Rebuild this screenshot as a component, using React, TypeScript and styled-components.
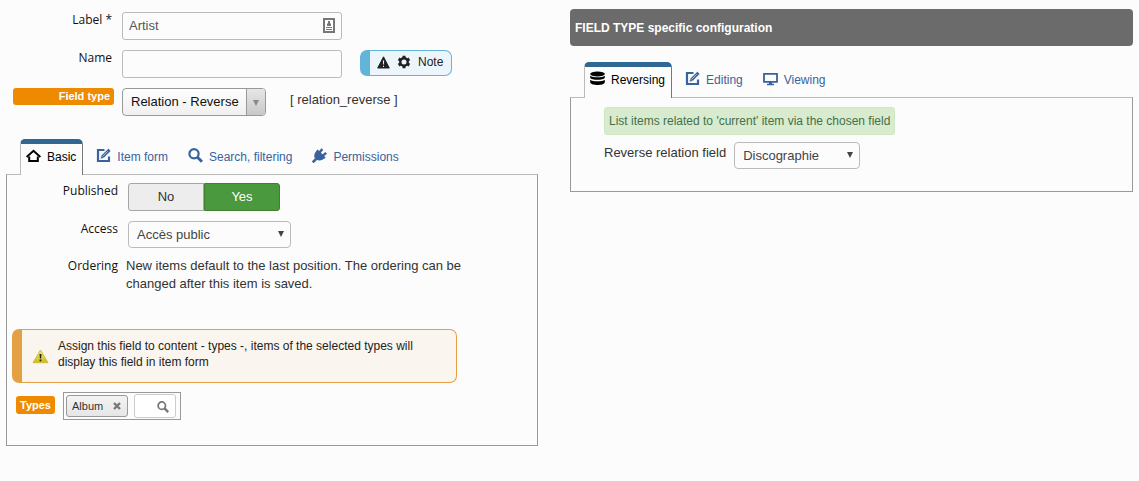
import React, { useState } from "react";
import styled, { createGlobalStyle, css } from "styled-components";

const GlobalStyle = createGlobalStyle`
  *, *::before, *::after { box-sizing: border-box; }
  body {
    margin: 0;
    background: #fcfcfc;
    color: #333;
    font: 13px/18px "Liberation Sans", Arial, sans-serif;
  }
  button, input, select { font: inherit; }
`;

const Page = styled.main`
  display: grid;
  grid-template-columns: minmax(0, 532fr) minmax(0, 563fr);
  column-gap: 32px;
  align-items: start;
  padding: 9px 6px 24px;
`;

const Column = styled.section`
  min-width: 0;
`;

const FieldList = styled.div`
  display: flex;
  flex-direction: column;
  gap: 10px;
  padding-top: 3px;
`;

const FieldRow = styled.div`
  display: flex;
  align-items: flex-start;
`;

const FieldLabel = styled.label<{ $wide?: boolean }>`
  flex: none;
  width: 116px;
  padding-right: ${(p) => (p.$wide ? 4 : 10)}px;
  color: #111;
  font: 12px/16px "Open Sans", "Noto Sans", sans-serif;
  text-align: right;
`;

const TypeLabel = styled.label`
  flex: none;
  width: 101px;
  margin: 0 8px 0 7px;
  padding-right: 4px;
  border-radius: 3px;
  background: #ed8a00;
  color: #fff;
  font-size: 11px;
  line-height: 17px;
  font-weight: bold;
  text-align: right;
`;

const InputFrame = styled.div`
  position: relative;
  width: 220px;
`;

const TextInput = styled.input`
  display: block;
  width: 100%;
  height: 28px;
  padding: 0 24px 2px 6px;
  border: 1px solid #bbb;
  border-radius: 3px;
  background: #fcfcfc;
  color: #555;
`;

const CardIcon = styled.svg`
  position: absolute;
  top: 6px;
  right: 7px;
  pointer-events: none;
`;

const Note = styled.button`
  display: flex;
  align-items: center;
  height: 26px;
  margin-left: 18px;
  padding: 0 8px 2px 7px;
  border: 1px solid #62b5d9;
  border-left-width: 10px;
  border-radius: 7px;
  background: #ecf5fc;
  color: #222;
  font-size: 12px;

  svg + svg { margin: 0 7px; }
`;

const SelectFrame = styled.div<{ $width: number; $combo?: boolean }>`
  position: relative;
  width: ${(p) => p.$width}px;

  select {
    appearance: none;
    display: block;
    width: 100%;
    height: 27px;
    padding: 0 20px 0 8px;
    border: 1px solid #bbb;
    border-radius: 4px;
    background: #fcfcfc;
    color: #444;
  }

  svg {
    position: absolute;
    top: 9px;
    right: 6px;
    pointer-events: none;
  }

  ${(p) =>
    p.$combo &&
    css`
      select {
        height: 28px;
        border-color: #999;
        background: linear-gradient(#fdfdfd, #f0f0f0);
        color: #111;
      }
      span {
        position: absolute;
        top: 1px;
        right: 1px;
        bottom: 1px;
        width: 19px;
        border-left: 1px solid #999;
        border-radius: 0 3px 3px 0;
        background: linear-gradient(#e6e6e6, #c8c8c8);
        pointer-events: none;
      }
      svg { top: 11px; }
    `}
`;

const FieldCode = styled.span`
  margin-left: 24px;
  line-height: 24px;
`;

const Tabs = styled.div`
  display: flex;
  gap: 7px;
  padding-left: 14px;
`;

const TabButton = styled.button<{ $active: boolean }>`
  position: relative;
  display: flex;
  align-items: center;
  gap: 6px;
  height: 36px;
  margin-bottom: -1px;
  padding: 4px 6px 6px 5px;
  border: 1px solid transparent;
  border-bottom: 0;
  background: transparent;
  color: #39639f;
  font-size: 12px;
  line-height: 18px;
  cursor: pointer;

  svg { flex: none; margin-bottom: 2px; }

  ${(p) =>
    p.$active &&
    css`
      padding-top: 0;
      border-top: 5px solid #2f6893;
      border-right-color: #777;
      border-left-color: #bbb;
      border-radius: 5px 5px 0 0;
      background: #fcfcfc;
      color: #000;
    `}
`;

const Panel = styled.div`
  border: 1px solid #999;
  border-top-color: #bbb;
`;

const LeftTabs = styled.div`
  margin-top: 23px;
`;

const BasicPanel = styled(Panel)`
  padding: 8px 5px 25px;
`;

const PanelFields = styled.div`
  display: flex;
  flex-direction: column;
  gap: 10px;
`;

const Toggle = styled.div`
  display: flex;
  width: 152px;
  height: 28px;

  input {
    appearance: none;
    position: absolute;
    margin: 0;
  }
`;

const ToggleOption = styled.label<{ $on: boolean; $yes?: boolean }>`
  flex: 1;
  border: 1px solid ${(p) => (p.$on ? "#3f8030" : "#a5a5a5")};
  border-radius: ${(p) => (p.$yes ? "0 3px 3px 0" : "3px 0 0 3px")};
  background: ${(p) => (p.$on ? "#4b993f" : "#ededed")};
  color: ${(p) => (p.$on ? "#fff" : "#333")};
  line-height: 25px;
  text-align: center;
  cursor: pointer;
`;

const OrderingText = styled.p`
  max-width: 350px;
  margin: -1px 0 0 -2px;
`;

const Warning = styled.div`
  display: flex;
  align-items: center;
  width: 445px;
  max-width: 100%;
  height: 54px;
  margin-top: 36px;
  padding: 0 24px 4px 10px;
  border: 1px solid #e4a044;
  border-left-width: 10px;
  border-radius: 7px;
  background: #faf5ef;
  color: #222;
  font-size: 12px;
  line-height: 16px;

  svg { flex: none; margin: 4px 9px 0 0; }
  p { margin: 0; }
`;

const TypesRow = styled.div`
  display: flex;
  align-items: flex-start;
  gap: 8px;
  margin: 9px 0 0 4px;
`;

const TypesLabel = styled.label`
  margin-top: 4px;
  padding: 0 4px;
  border-radius: 3px;
  background: #ed8a00;
  color: #fff;
  font-size: 11px;
  font-weight: bold;
`;

const TokenBox = styled.div`
  display: flex;
  align-items: flex-start;
  gap: 6px;
  width: 118px;
  height: 28px;
  padding: 1px 2px;
  border: 1px solid #999;
`;

const Token = styled.span`
  display: flex;
  align-items: center;
  gap: 10px;
  width: 62px;
  height: 22px;
  margin-top: 1px;
  padding-left: 5px;
  border: 1px solid #999;
  border-radius: 3px;
  background: linear-gradient(#f3f3f3, #e6e6e6);
  font-size: 11px;

  button {
    display: flex;
    padding: 0;
    border: 0;
    background: none;
    cursor: pointer;
  }
`;

const TokenSearch = styled.div`
  position: relative;
  width: 42px;
  color: #777;

  input {
    display: block;
    width: 100%;
    height: 24px;
    padding: 0 20px 0 4px;
    border: 1px solid #ccc;
    border-radius: 3px;
    background: #fff;
  }
  svg { position: absolute; top: 7px; right: 7px; pointer-events: none; }
`;

const Banner = styled.h2`
  margin: 0 0 16px;
  padding: 10px 5px 9px;
  border-radius: 4px;
  background: #6b6b6b;
  color: #fff;
  font-size: 12px;
  line-height: 18px;
`;

const ReversingPanel = styled(Panel)`
  padding: 9px 33px 22px;
`;

const Hint = styled.p`
  width: fit-content;
  margin: 0 0 7px;
  padding: 4px;
  border: 1px solid #d0e8c0;
  border-radius: 3px;
  background: #d8ebcf;
  color: #43704a;
  font-size: 12px;
`;

const ReverseLabel = styled.label`
  margin: 2px 8px 0 0;
`;

type IconProps = { color?: string };

const Arrow = ({ color = "#444" }: IconProps) => (
  <svg width="8" height="8" viewBox="0 0 8 8" aria-hidden="true">
    <path d="M1 1h6L4 7z" fill={color} />
  </svg>
);

const HouseIcon = () => (
  <svg width="15" height="14" viewBox="0 0 15 14" fill="none" stroke="currentColor" strokeWidth="2" aria-hidden="true">
    <path d="M.6 8 7.500 1.800 14.400 8" />
    <path d="M3.200 7.500V12h8.600V7.500" />
  </svg>
);

const EditIcon = () => (
  <svg width="15" height="15" viewBox="0 0 15 15" fill="none" aria-hidden="true">
    <path d="M8.500 2H2v11h11V8.500" stroke="currentColor" strokeWidth="2.200" />
    <path d="M12.300.4 14.800 2.900 8 9.800 4.200 11.200 5.500 7.200z" fill="currentColor" stroke="#fcfcfc" strokeWidth=".5" />
    <path d="m6.500 8.500 5.200-5.200" stroke="#fcfcfc" strokeWidth=".6" />
  </svg>
);

const SearchIcon = ({ size = 15 }: { size?: number }) => (
  <svg width={size} height={size} viewBox="0 0 15 15" fill="none" stroke="currentColor" aria-hidden="true">
    <circle cx="6" cy="5.800" r="4.600" strokeWidth="2.200" />
    <path d="m9.200 9 4.800 4.800" strokeWidth="3" />
  </svg>
);

const PlugIcon = () => (
  <svg width="15" height="15" viewBox="0 0 15 15" fill="none" stroke="currentColor" aria-hidden="true">
    <path d="m5.300 2.200 7.600 7.600c-1.500 2-4.900 3.500-8 2.300L2.700 10C1.500 7 3 3.800 5.300 2.200z" fill="currentColor" stroke="none" />
    <path d="m.7 14.300 3.500-3.500" strokeWidth="2.600" />
    <path d="m7.200 5 3.100-4M10.200 8.200l4-3.400" strokeWidth="2.400" />
    <path d="m8.200 5.300 2 2M5 2.100l8 8" strokeWidth="1.800" />
  </svg>
);

const DatabaseIcon = () => (
  <svg width="15" height="15" viewBox="0 0 16 15" fill="#000" aria-hidden="true">
    <ellipse cx="8" cy="2.700" rx="7.800" ry="2.600" />
    <path d="M.2 4.500C3 6.700 13 6.700 15.800 4.500v2.200C14.500 9.600 1.500 9.600.2 6.700z" />
    <path d="M.2 8.800C3 11 13 11 15.800 8.800v2.900c-1 3.600-14.600 3.600-15.600 0z" />
  </svg>
);

const ScreenIcon = () => (
  <svg width="15" height="14" viewBox="0 0 15 14" fill="none" stroke="currentColor" aria-hidden="true">
    <path d="M1 1.800h13v8H1z" strokeWidth="1.800" />
    <path d="M7.500 10v2" strokeWidth="3" />
    <path d="M4 12.500h7" strokeWidth="1.500" />
  </svg>
);

const AlertIcon = () => (
  <svg width="13" height="13" viewBox="0 0 13 13" aria-hidden="true">
    <path d="M6.500.8 12.300 12H.7z" fill="#222" stroke="#222" strokeLinejoin="round" />
    <path d="M5.900 4.500h1.200L6.900 8.500h-.8zM6 9.700h1v1.200H6z" fill="#ecf5fc" />
  </svg>
);

const GearIcon = () => (
  <svg width="14" height="14" viewBox="0 0 14 14" fill="none" stroke="#222" aria-hidden="true">
    <circle cx="7" cy="7" r="3.700" strokeWidth="2.400" />
    <path d="M7 .8v2.400M7 10.800v2.400M1.600 3.900l2.100 1.200M10.300 8.900l2.100 1.200M1.600 10.100l2.100-1.200M10.300 5.100l2.100-1.200" strokeWidth="3" />
  </svg>
);

const CautionIcon = () => (
  <svg width="17" height="15" viewBox="0 0 17 15" aria-hidden="true">
    <defs>
      <linearGradient id="caution" x2="0" y2="1">
        <stop stopColor="#f2ef83" />
        <stop offset="1" stopColor="#cdbd0c" />
      </linearGradient>
    </defs>
    <path d="M8.500 1 16 13.700H1z" fill="url(#caution)" stroke="#c9bd42" strokeLinejoin="round" />
    <path d="M7.500 5h2l-.4 4.500H7.900zM7.600 10.400h1.800v1.800H7.600z" fill="#222" />
  </svg>
);

type TabItem = { name: string; icon: React.ReactNode };

const leftTabs: TabItem[] = [
  { name: "Basic", icon: <HouseIcon /> },
  { name: "Item form", icon: <EditIcon /> },
  { name: "Search, filtering", icon: <SearchIcon /> },
  { name: "Permissions", icon: <PlugIcon /> },
];

const rightTabs: TabItem[] = [
  { name: "Reversing", icon: <DatabaseIcon /> },
  { name: "Editing", icon: <EditIcon /> },
  { name: "Viewing", icon: <ScreenIcon /> },
];

function TabBar({ items, label }: { items: TabItem[]; label: string }) {
  const [active, setActive] = useState(0);
  return (
    <Tabs role="tablist" aria-label={label}>
      {items.map((item, i) => (
        <TabButton key={item.name} type="button" role="tab" aria-selected={i === active} $active={i === active} onClick={() => setActive(i)}>
          {item.icon}
          {item.name}
        </TabButton>
      ))}
    </Tabs>
  );
}

export default function App() {
  const [published, setPublished] = useState(true);
  return (
    <>
      <GlobalStyle />
      <Page>
        <Column>
          <FieldList>
            <FieldRow>
              <FieldLabel htmlFor="label">Label *</FieldLabel>
              <InputFrame>
                <TextInput id="label" defaultValue="Artist" />
                <CardIcon width="12" height="15" viewBox="0 0 12 15" aria-hidden="true">
                  <path d="M1 1h10v13H1z" fill="#fff" stroke="#777" strokeWidth="2" />
                  <path d="M5 3h2v2.500h1V8H4V5.500h1zM3 9h6v1H3zM3 11h6v1H3z" fill="#777" />
                </CardIcon>
              </InputFrame>
            </FieldRow>
            <FieldRow>
              <FieldLabel htmlFor="name">Name</FieldLabel>
              <InputFrame>
                <TextInput id="name" />
              </InputFrame>
              <Note type="button">
                <AlertIcon />
                <GearIcon />
                Note
              </Note>
            </FieldRow>
            <FieldRow>
              <TypeLabel htmlFor="type">Field type</TypeLabel>
              <SelectFrame $width={144} $combo>
                <select id="type">
                  <option>Relation - Reverse</option>
                </select>
                <span />
                <Arrow color="#888" />
              </SelectFrame>
              <FieldCode>[ relation_reverse ]</FieldCode>
            </FieldRow>
          </FieldList>

          <LeftTabs>
            <TabBar items={leftTabs} label="Field settings" />
            <BasicPanel>
              <PanelFields>
                <FieldRow role="radiogroup" aria-labelledby="published">
                  <FieldLabel as="span" id="published">Published</FieldLabel>
                  <Toggle>
                    <ToggleOption $on={!published}>
                      <input type="radio" name="published" checked={!published} onChange={() => setPublished(false)} />
                      No
                    </ToggleOption>
                    <ToggleOption $on={published} $yes>
                      <input type="radio" name="published" checked={published} onChange={() => setPublished(true)} />
                      Yes
                    </ToggleOption>
                  </Toggle>
                </FieldRow>
                <FieldRow>
                  <FieldLabel htmlFor="access">Access</FieldLabel>
                  <SelectFrame $width={163}>
                    <select id="access">
                      <option>Accès public</option>
                    </select>
                    <Arrow />
                  </SelectFrame>
                </FieldRow>
                <FieldRow>
                  <FieldLabel as="span">Ordering</FieldLabel>
                  <OrderingText>
                    New items default to the last position. The ordering can be changed after this item is saved.
                  </OrderingText>
                </FieldRow>
              </PanelFields>
              <Warning>
                <CautionIcon />
                <p>Assign this field to content - types -, items of the selected types will display this field in item form</p>
              </Warning>
              <TypesRow>
                <TypesLabel htmlFor="types">Types</TypesLabel>
                <TokenBox>
                  <Token>
                    Album
                    <button type="button" aria-label="Remove Album">
                      <svg width="8" height="8" viewBox="0 0 8 8" stroke="#777" strokeWidth="2.400" aria-hidden="true">
                        <path d="m1 1 6 6M7 1 1 7" />
                      </svg>
                    </button>
                  </Token>
                  <TokenSearch>
                    <input id="types" />
                    <SearchIcon size={12} />
                  </TokenSearch>
                </TokenBox>
              </TypesRow>
            </BasicPanel>
          </LeftTabs>
        </Column>

        <Column>
          <Banner>FIELD TYPE specific configuration</Banner>
          <TabBar items={rightTabs} label="Field type settings" />
          <ReversingPanel>
            <Hint>List items related to 'current' item via the chosen field</Hint>
            <FieldRow>
              <ReverseLabel htmlFor="reverse">Reverse relation field</ReverseLabel>
              <SelectFrame $width={126}>
                <select id="reverse">
                  <option>Discographie</option>
                </select>
                <Arrow />
              </SelectFrame>
            </FieldRow>
          </ReversingPanel>
        </Column>
      </Page>
    </>
  );
}
